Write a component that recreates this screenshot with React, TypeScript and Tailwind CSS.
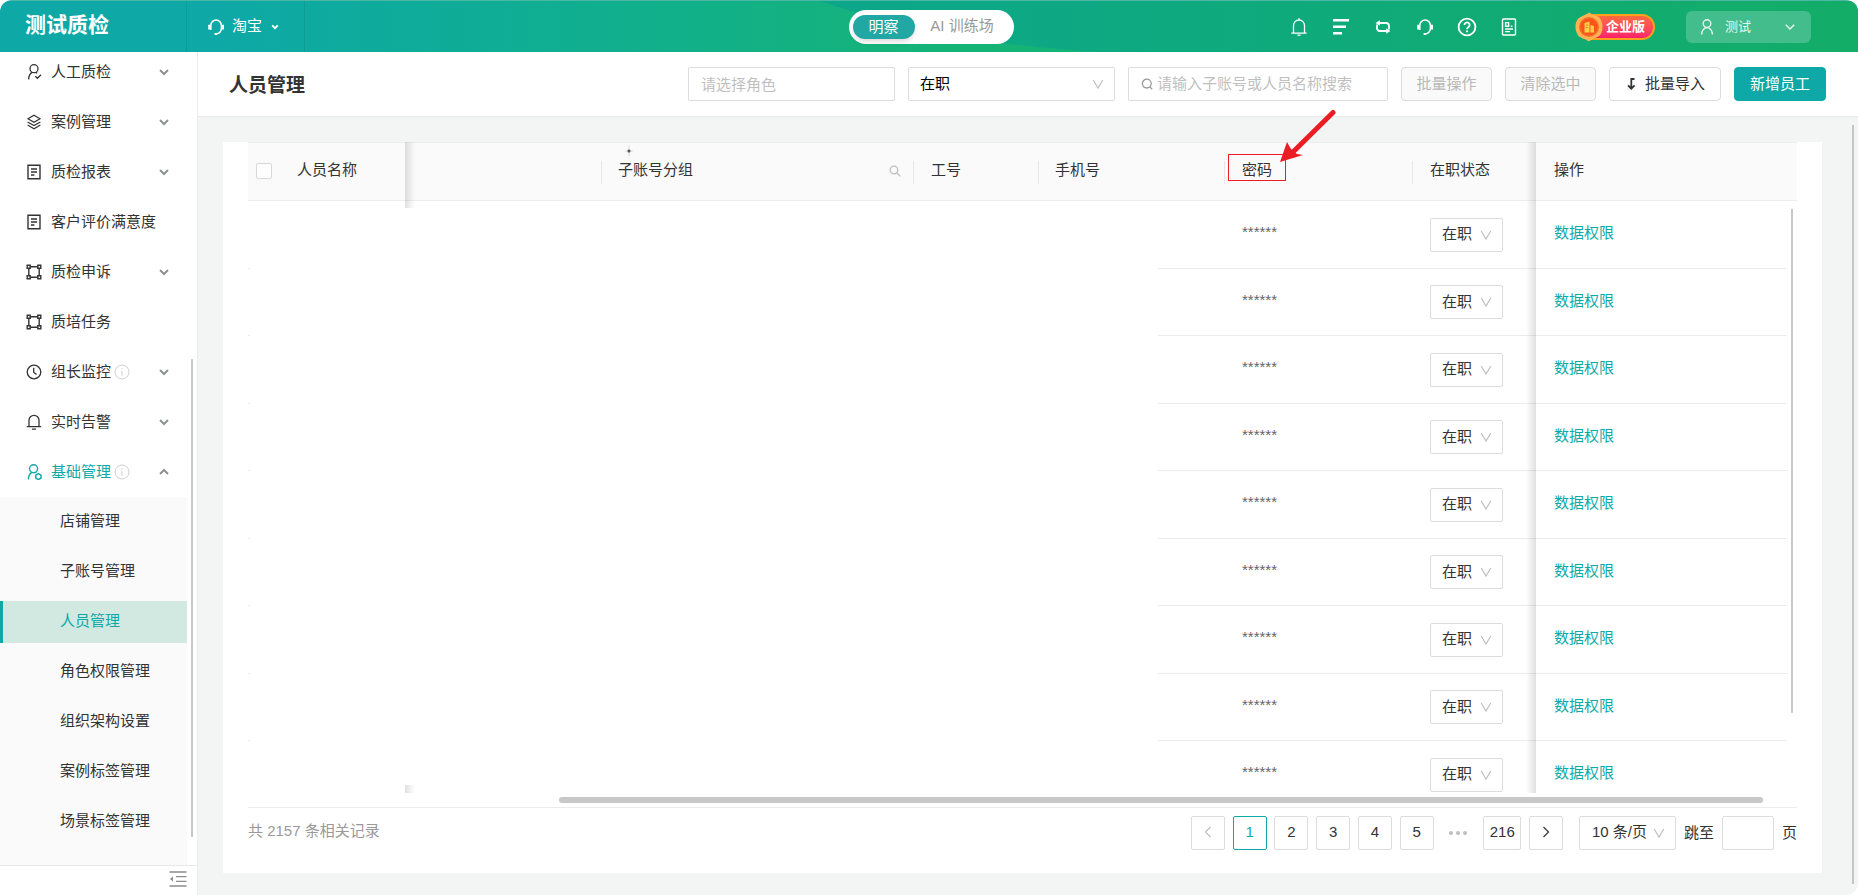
import { useState } from 'react';
import type { ReactNode } from 'react';

type MenuItem = {
    label: string;
    icon: ReactNode;
    arrow?: 'down' | 'up';
    info?: boolean;
    active?: boolean;
};

// Shared line icon wrapper
function Svg({ children, size = 16, box = 16, stroke = 1.2 }: { children: ReactNode; size?: number; box?: number; stroke?: number }) {
    return (
        <svg
            width={size}
            height={size}
            viewBox={`0 0 ${box} ${box}`}
            fill="none"
            stroke="currentColor"
            strokeWidth={stroke}
            className="shrink-0"
            aria-hidden="true"
        >
            {children}
        </svg>
    );
}

const UserCheck = () => (
    <Svg stroke={1.3}>
        <circle cx="8" cy="4.7" r="4" />
        <path d="M6.2 8.4C3.8 9.5 2.8 11.6 2.6 15.4M9.8 8.4l1.4.9M9.4 12.3l2 2 3.6-3.6" />
    </Svg>
);

const Layers = () => (
    <Svg>
        <path d="M8 1.2l6 3.5-6 3.5-6-3.5zM1.6 8L8 11.6 14.4 8M1.6 11L8 14.7l6.4-3.7" />
    </Svg>
);

const Report = () => (
    <Svg stroke={1.4}>
        <path d="M2 1.3h12v13.4H2zM5 5h6M5 8h6M5 11h3.4" />
    </Svg>
);

const Nodes = () => (
    <Svg stroke={1.4}>
        <path d="M1.2 1.2h3v3h-3zM11.8 1.2h3v3h-3zM1.2 11.8h3v3h-3zM11.8 11.8h3v3h-3zM4.2 2.7h7.6M4.2 13.3h7.6M2.8 4.2v7.6M13.2 4.2v7.6" />
    </Svg>
);

const Clock = () => (
    <Svg stroke={1.3}>
        <circle cx="8" cy="8" r="6.8" />
        <path d="M7.7 3.8v4.4l2.8 2.4" />
    </Svg>
);

const Bell = () => (
    <Svg stroke={1.3}>
        <path d="M3 12.600V6.300a5 5 0 0 1 10 0v6.300M.8 12.600h14.400M6 15.200h4" />
    </Svg>
);

const UserGear = () => (
    <Svg stroke={1.4}>
        <circle cx="7.6" cy="4.7" r="4" />
        <path d="M6 8.400C3.600 9.500 2.600 11.600 2.400 15.400M9.400 8.400l1 .6" />
        <path d="M12.400 9.600l2.600 1.500v3l-2.600 1.500-2.600-1.500v-3z" strokeWidth="1.500" />
    </Svg>
);

const Info = () => (
    <span className="ml-[3px] text-[#d0d0d0]">
        <Svg stroke={1}>
            <circle cx="8" cy="8" r="7" />
            <path d="M8 6.8v5M8 4v1.4" />
        </Svg>
    </span>
);

const Headset = ({ size = 18 }: { size?: number }) => (
    <Svg size={size} box={18} stroke={1.5}>
        <path d="M3.8 12V7.4a5.3 5.3 0 0 1 10.6 0V10c0 3-1.8 5.2-4.4 5.8" />
        <path d="M2.4 6.8v4.6M15.8 6.8v4.6" strokeWidth="2.4" />
        <path d="M7.6 16h2.6" strokeWidth="2" />
    </Svg>
);

const Down = () => (
    <Svg size={14} box={14} stroke={1.2}>
        <path d="M2.2 3L7 11l4.800-8" />
    </Svg>
);

const MENU: MenuItem[] = [
    { label: '人工质检', icon: <UserCheck />, arrow: 'down' },
    { label: '案例管理', icon: <Layers />, arrow: 'down' },
    { label: '质检报表', icon: <Report />, arrow: 'down' },
    { label: '客户评价满意度', icon: <Report /> },
    { label: '质检申诉', icon: <Nodes />, arrow: 'down' },
    { label: '质培任务', icon: <Nodes /> },
    { label: '组长监控', icon: <Clock />, arrow: 'down', info: true },
    { label: '实时告警', icon: <Bell />, arrow: 'down' },
    { label: '基础管理', icon: <UserGear />, arrow: 'up', info: true, active: true },
];

const SUBMENU = ['店铺管理', '子账号管理', '人员管理', '角色权限管理', '组织架构设置', '案例标签管理', '场景标签管理'];

const ROWS = [1, 2, 3, 4, 5, 6, 7, 8, 9];

const TOOLS: { label: string; icon: ReactNode }[] = [
    {
        label: '通知',
        icon: (
            <Svg size={20} box={20} stroke={1.3}>
                <path d="M4.500 16V8.500a5.500 5.500 0 0 1 11 0V16M2.400 16.200h15.200M10 1.200V3M8.400 18.200h3.200" />
            </Svg>
        ),
    },
    {
        label: '列表',
        icon: (
            <Svg size={18} box={18} stroke={2.6}>
                <path d="M1 2.3h16M1 8.800h13M1 15.300h9" />
            </Svg>
        ),
    },
    {
        label: '切换',
        icon: (
            <Svg size={18} box={18} stroke={1.8}>
                <path d="M4.500 5H12a3 3 0 0 1 3 3v3.500M13.500 13H6a3 3 0 0 1-3-3V6.500" />
                <path d="M1.600 5l4.200-2.800v5.600zM16.400 13l-4.200-2.800v5.600z" fill="currentColor" stroke="none" />
            </Svg>
        ),
    },
    { label: '客服', icon: <Headset /> },
    {
        label: '帮助',
        icon: (
            <Svg size={20} box={20} stroke={1.8}>
                <circle cx="10" cy="10" r="8.4" />
                <path d="M7.4 8a2.6 2.6 0 1 1 3.9 2.3c-.9.5-1.3.9-1.3 1.9M10 13.4v1.8" />
            </Svg>
        ),
    },
    {
        label: '文档',
        icon: (
            <Svg size={18} box={18} stroke={1.4}>
                <rect x="2.500" y="1" width="13" height="16" rx="1" />
                <path d="M5.600 4.600h3v3.600h-3zM10.800 8.200h1.600M5 11h8M5 13.600h5" />
            </Svg>
        ),
    },
];

function TopBar() {
    return (
        <header className="relative flex h-13 shrink-0 items-center border-t border-[#4cb7a4] bg-linear-to-r from-[#0ea9a6] from-12% via-[#16b378] via-50% to-[#13ad68] text-white">
            {/* Wave on the right part of the bar */}
            <svg className="absolute inset-0 h-full w-full" viewBox="0 0 1858 51" preserveAspectRatio="none" aria-hidden="true">
                <defs>
                    <linearGradient id="wave" x1="0" x2="1" y1="0" y2="0">
                        <stop offset="0" stopColor="#0ca78b" />
                        <stop offset="1" stopColor="#13ad68" />
                    </linearGradient>
                </defs>
                <path d="M820 0C890 24 990 46 1100 51H1858V0z" fill="url(#wave)" />
            </svg>
            <div className="relative flex h-full flex-1 items-center">
                <div className="flex h-full w-[187px] items-center border-r border-[#109b98] pb-1 pl-[25px] text-[21px] font-bold">
                    测试质检
                </div>
                <button className="flex h-full w-[118px] items-center border-r border-[#109b98] pl-5 text-[15px]">
                    <Headset />
                    <span className="ml-[7px]">淘宝</span>
                    <span className="ml-[9px]">
                        <Svg size={8} box={8} stroke={1.8}>
                            <path d="M1.2 2.4L4 5.2l2.8-2.8" />
                        </Svg>
                    </span>
                </button>
            </div>
            <div className="relative ml-1 flex h-[34px] w-[165px] items-center rounded-full bg-white pl-1 text-[15px] text-[#999]">
                <button className="h-6 w-[62px] rounded-full bg-[#22a8a4] leading-6 text-white shadow-md">明察</button>
                <button className="flex-1 pr-1">AI 训练场</button>
            </div>
            <div className="relative flex h-full flex-1 items-center justify-end">
                <div className="flex items-center gap-[22px]">
                    {TOOLS.map((tool) => (
                        <button key={tool.label} aria-label={tool.label} className="flex w-5 justify-center">
                            {tool.icon}
                        </button>
                    ))}
                </div>
                <div className="relative ml-[58px] flex h-[26px] w-[78px] items-center justify-end rounded-full border-2 border-[#fba11b] bg-linear-to-b from-[#ff6a3c] to-[#fb1d6c] pr-2 text-[13px] font-bold">
                    企业版
                    <svg className="absolute -top-1 -left-1" width="28" height="30" viewBox="0 0 28 30" aria-hidden="true">
                        <path d="M14 .5c3 2.500 10 3 11.500 6.500S27.500 12 27.500 15s-.5 5-2 7.500S17 27 14 29.500c-3-2.500-10-3.500-11.500-7S.5 18 .5 15s.5-5 2-7.500S11 3 14 .5z" fill="#fdb351" />
                        <circle cx="14" cy="15" r="10" fill="#f4702b" />
                        <circle cx="14" cy="15" r="8.500" fill="#fb5418" />
                        <path d="M9.500 20.500V11l5-1.500v11zM15.500 20.500V13l3.500 1v6.500z" fill="#ffcf4a" />
                        <path d="M11 13h2M11 15.500h2" stroke="#fb7a18" />
                    </svg>
                </div>
                <button className="mr-[47px] ml-[31px] flex h-8 w-[125px] items-center rounded-md bg-[#43bd8b] pr-4 pl-[13px] text-[13px] text-[#e5f7ef]">
                    <Svg size={16} stroke={1.4}>
                        <circle cx="8" cy="4.600" r="3.800" />
                        <path d="M2.600 15.600c0-3.800 2.400-7 5.400-7s5.400 3.200 5.400 7" />
                    </Svg>
                    <span className="ml-2.5">测试</span>
                    <span className="ml-auto">
                        <Svg size={10} box={10} stroke={1.5}>
                            <path d="M.8 2.800L5 7l4.200-4.200" />
                        </Svg>
                    </span>
                </button>
            </div>
        </header>
    );
}

function Sidebar() {
    return (
        <aside className="relative flex w-[198px] shrink-0 flex-col border-r border-[#ebeded] bg-white text-[15px] text-[#333]">
            <nav className="min-h-0 flex-1 overflow-hidden">
                <div className="-mt-[5px] w-[187px]">
                    {MENU.map((item) => (
                        <button
                            key={item.label}
                            className={`flex h-[50px] w-full items-center pr-[17px] pl-[26px] ${item.active ? 'text-[#0ea9a6]' : ''}`}
                        >
                            {item.icon}
                            <span className="ml-[9px]">{item.label}</span>
                            {item.info && <Info />}
                            {item.arrow && (
                                <span className="ml-auto text-[#8c9392]">
                                    <Svg size={12} box={12} stroke={2}>
                                        <path d={item.arrow === 'down' ? 'M2 4l4 4 4-4' : 'M2 8l4-4 4 4'} />
                                    </Svg>
                                </span>
                            )}
                        </button>
                    ))}
                    <div className="flex h-96 flex-col gap-2 bg-[#fafafa] pt-1">
                        {SUBMENU.map((label) => (
                            <a
                                key={label}
                                href="#"
                                className={`block h-[42px] shrink-0 leading-10 ${label === '人员管理' ? 'border-l-3 border-[#0ea9a6] bg-[#d2e9e2] pl-[57px] text-[#0ea9a6]' : 'pl-[60px]'}`}
                            >
                                {label}
                            </a>
                        ))}
                    </div>
                </div>
            </nav>
            <div className="absolute top-[307px] right-1 bottom-[58px] w-0.5 bg-[#c8c8c8]" />
            <div className="flex h-[30px] items-start justify-end border-t border-[#e8e8e8] pt-1 pr-2.5">
                <button aria-label="收起菜单" className="text-[#8c8c8c]">
                    <Svg size={18} box={18} stroke={1.3}>
                        <path d="M.5 2h17M7 6.600h10.500M7 11.300h10.500M.5 16h17" />
                        <path d="M1 9l3-2.600v5.200z" fill="currentColor" stroke="none" />
                    </Svg>
                </button>
            </div>
        </aside>
    );
}

function Toolbar() {
    const box = 'h-[34px] rounded-xs border border-[#dcdcdc] bg-white text-[15px] outline-none placeholder:text-[#bfbfbf]';
    const button = 'h-[34px] rounded border text-[15px]';
    return (
        <div className="flex h-[65px] shrink-0 items-center gap-[13px] border-b border-[#e8eaea] bg-white pr-8 pl-[31px]">
            <h1 className="mr-auto pt-1 text-[19px] font-bold text-[#333]">人员管理</h1>
            <input aria-label="角色" placeholder="请选择角色" className={`${box} w-[207px] px-3`} />
            <div className="relative">
                <select aria-label="在职状态" className={`${box} w-[207px] appearance-none px-[11px]`}>
                    <option>在职</option>
                    <option>离职</option>
                </select>
                <span className="pointer-events-none absolute top-2.5 right-2.5 text-[#bfbfbf]"><Down /></span>
            </div>
            <label className={`${box} flex w-[260px] items-center pl-3`}>
                <span className="text-[#999]">
                    <Svg size={12} box={12} stroke={1.3}>
                        <circle cx="5.800" cy="5.600" r="4.400" />
                        <path d="M8.800 8.800l2.400 2.600" />
                    </Svg>
                </span>
                <input aria-label="搜索" placeholder="请输入子账号或人员名称搜索" className="ml-1 min-w-0 flex-1 outline-none placeholder:text-[#bfbfbf]" />
            </label>
            <button disabled className={`${button} w-[91px] border-[#dcdcdc] bg-[#fafafa] text-[#b8b8b8]`}>批量操作</button>
            <button disabled className={`${button} w-[91px] border-[#dcdcdc] bg-[#fafafa] text-[#b8b8b8]`}>清除选中</button>
            <button className={`${button} flex w-28 items-center justify-center gap-2 border-[#dcdcdc] bg-white text-[#333]`}>
                <Svg size={12} box={12} stroke={1.8}>
                    <path d="M9.500 1H6.300v9.500M3 7.300l3.300 3.400 3.300-3.400" />
                </Svg>
                批量导入
            </button>
            <button className={`${button} w-[92px] border-[#0ea9a6] bg-[#0ea9a6] text-white`}>新增员工</button>
        </div>
    );
}

function StaffTable() {
    const th = 'relative text-left font-normal';
    const line = 'before:absolute before:left-0 before:top-[18px] before:h-[23px] before:w-px before:bg-[#e8e8e8]';
    return (
        <div className="relative min-h-0 flex-1 overflow-hidden">
            <table className="w-full table-fixed border-separate border-spacing-0 text-[15px] text-[#333]">
                <colgroup>
                    <col className="w-[157px]" />
                    <col className="w-[196px]" />
                    <col className="w-[312px]" />
                    <col className="w-[125px]" />
                    <col className="w-[186px]" />
                    <col className="w-[188px]" />
                    <col className="w-[124px]" />
                    <col />
                </colgroup>
                <thead>
                    <tr className="h-[59px] *:border-y *:border-[#ededed] *:bg-[#fafafa] *:pb-0.5">
                        <th className={th}>
                            <label className="flex items-center">
                                <input type="checkbox" aria-label="全选" className="ml-2 size-4 appearance-none rounded-xs border border-[#d9d9d9] bg-white" />
                                <span className="ml-[25px]">人员名称</span>
                            </label>
                        </th>
                        <th className={th} />
                        <th className={`${th} ${line} pl-[17px]`}>
                            <div className="flex items-center justify-between pr-3">
                                子账号分组
                                <button aria-label="筛选分组" className="text-[#bfbfbf]">
                                    <Svg size={12} box={12} stroke={1.3}>
                                        <circle cx="5" cy="5" r="3.800" />
                                        <path d="M7.800 7.800l3.400 3.600" />
                                    </Svg>
                                </button>
                            </div>
                            {/* Small sparkle above the label */}
                            <svg className="absolute top-0 left-5" width="16" height="16" viewBox="0 0 16 16" aria-hidden="true">
                                <path d="M8 1l1 6 4 1-4 1-1 6-1-6-4-1 4-1z" fill="#dcdcdc" />
                                <circle cx="8" cy="8" r="1.500" fill="#555" />
                            </svg>
                        </th>
                        <th className={`${th} ${line} pl-[18px]`}>工号</th>
                        <th className={`${th} ${line} pl-[17px]`}>手机号</th>
                        <th className={`${th} ${line} pl-[18px]`}>
                            密码
                            {/* Red callout frame */}
                            <span className="absolute top-[11px] left-1 h-[27px] w-[58px] border border-[#ec1c24]" />
                        </th>
                        <th className={`${th} ${line} pl-[18px]`}>在职状态</th>
                        <th className={`${th} pl-[18px]`}>操作</th>
                    </tr>
                </thead>
                <tbody>
                    {ROWS.map((row) => (
                        <tr key={row} className="odd:h-17 even:h-[67px] *:border-b *:border-[#ebebeb] *:pt-0">
                            <td />
                            <td />
                            <td />
                            <td />
                            <td />
                            <td className="pb-1 pl-[18px] text-[#666]">******</td>
                            <td className="pb-0 pl-[18px]">
                                <div className="relative w-[73px]">
                                    <select aria-label="在职状态" className="block h-[34px] w-full appearance-none rounded-xs border border-[#dcdcdc] bg-white px-[11px]">
                                        <option>在职</option>
                                        <option>离职</option>
                                    </select>
                                    <span className="pointer-events-none absolute top-2.5 right-2.5 text-[#bfbfbf]"><Down /></span>
                                </div>
                            </td>
                            <td className="pb-0.5 pl-[18px]">
                                <a href="#" className="text-[#0ea9a6]">数据权限</a>
                            </td>
                        </tr>
                    ))}
                </tbody>
            </table>
            {/* Edge shadows of the fixed columns */}
            <div className="absolute inset-y-0 left-[157px] w-2.5 bg-linear-to-r from-black/12 to-transparent" />
            <div className="absolute inset-y-0 right-[261px] w-2.5 bg-linear-to-l from-black/12 to-transparent" />
            {/* Blanked data region */}
            <div className="absolute top-[66px] right-[639px] bottom-2 left-0.5 bg-white" />
            {/* Vertical scroll gutter */}
            <div className="absolute top-[59px] right-0 bottom-0 w-2.5 bg-white" />
            <div className="absolute top-[67px] right-1 bottom-20 w-0.5 bg-[#c8c8c8]" />
        </div>
    );
}

function Pagination() {
    const [page, setPage] = useState(1);
    const cell = 'flex h-[34px] items-center justify-center rounded-xs border bg-white pb-0.5';
    const num = (n: number, width: string) => (
        <button
            key={n}
            onClick={() => setPage(n)}
            className={`${cell} ${width} ${page === n ? 'border-[#0ea9a6] text-[#0ea9a6]' : 'border-[#dcdcdc]'}`}
        >
            {n}
        </button>
    );
    return (
        <div className="flex h-[66px] shrink-0 items-start border-t border-[#ebebeb] pt-2 text-[15px] text-[#333]">
            <p className="mr-auto leading-[30px] text-[#999]">共 2157 条相关记录</p>
            <div className="flex w-[372px] items-center justify-between">
                <button aria-label="上一页" className={`${cell} w-[34px] border-[#dcdcdc] text-[#bfbfbf]`}>
                    <Svg size={12} box={12}><path d="M8.500 1L3.500 6l5 5" /></Svg>
                </button>
                {[1, 2, 3, 4, 5].map((n) => num(n, 'w-[34px]'))}
                <span className="flex w-[34px] justify-center gap-[3px]">
                    <i className="size-1 rounded-full bg-[#bfbfbf]" />
                    <i className="size-1 rounded-full bg-[#bfbfbf]" />
                    <i className="size-1 rounded-full bg-[#bfbfbf]" />
                </span>
                {num(216, 'w-[38px]')}
                <button aria-label="下一页" className={`${cell} w-[34px] border-[#dcdcdc]`}>
                    <Svg size={12} box={12}><path d="M3.500 1l5 5-5 5" /></Svg>
                </button>
            </div>
            <div className="relative ml-4">
                <select aria-label="每页条数" className="block h-[34px] w-[97px] appearance-none rounded-xs border border-[#dcdcdc] bg-white px-3 pb-0.5">
                    <option>10 条/页</option>
                    <option>20 条/页</option>
                </select>
                <span className="pointer-events-none absolute top-2.5 right-2.5 text-[#bfbfbf]"><Down /></span>
            </div>
            <label className="ml-2 flex h-[34px] items-center">
                跳至
                <input className="mx-2 h-[34px] w-[52px] rounded-xs border border-[#dcdcdc] px-2 outline-none" />
                页
            </label>
        </div>
    );
}

export default function App() {
    return (
        <div className="flex h-screen flex-col overflow-hidden rounded-xl bg-[#f3f5f5] font-['Liberation_Sans','Noto_Sans_CJK_SC',sans-serif]">
            <TopBar />
            <div className="flex min-h-0 flex-1">
                <Sidebar />
                <main className="relative flex min-w-0 flex-1 flex-col">
                    <Toolbar />
                    <div className="flex min-h-0 flex-1 pt-[25px] pr-9 pb-[22px] pl-[25px]">
                        <section className="flex min-w-0 flex-1 flex-col bg-white px-[25px]">
                            <StaffTable />
                            <div className="flex h-3.5 shrink-0 items-start pt-1 pr-[34px] pl-[311px]">
                                <div className="h-1.5 w-full rounded-full bg-[#c8c8c8]" />
                            </div>
                            <Pagination />
                        </section>
                    </div>
                    <div className="absolute top-[73px] right-1 bottom-[11px] w-0.5 bg-[#c4c6c6]" />
                    {/* Arrow pointing at the password column */}
                    <svg className="absolute top-[56px] right-[522px]" width="60" height="56" viewBox="0 0 60 56" aria-hidden="true">
                        <path d="M57 4.500L17 44" stroke="#ec1c24" strokeWidth="5" strokeLinecap="round" />
                        <path d="M4 54l7-20 4 7 6 5 6 1z" fill="#ec1c24" />
                    </svg>
                </main>
            </div>
        </div>
    );
}
